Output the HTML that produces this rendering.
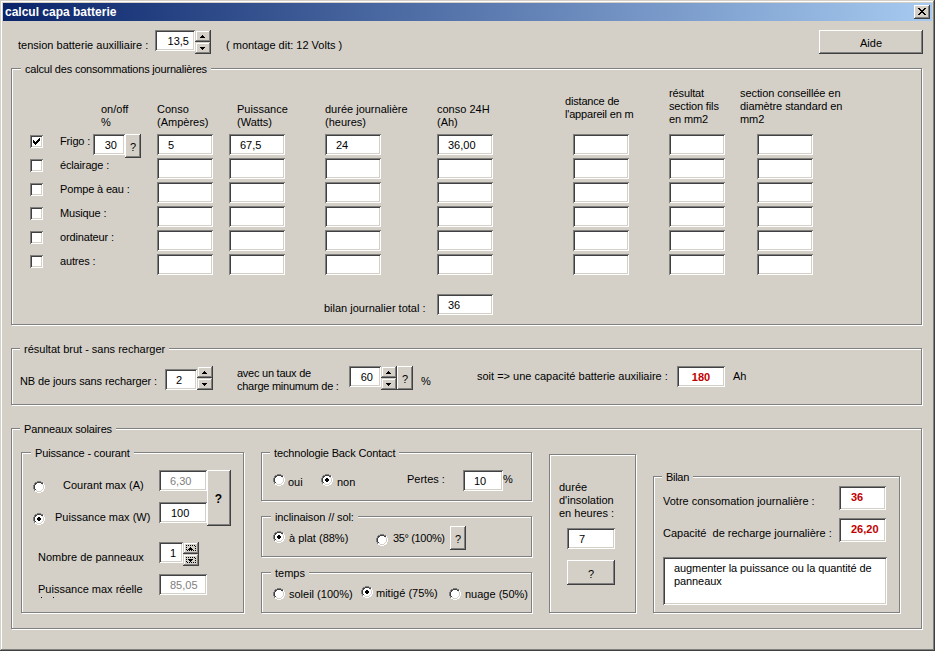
<!DOCTYPE html>
<html><head><meta charset="utf-8"><title>calcul capa batterie</title><style>
*{margin:0;padding:0;box-sizing:border-box}
html,body{width:935px;height:651px;overflow:hidden;background:#d4d0c8}
body{position:relative;font-family:"Liberation Sans",sans-serif;font-size:11px;line-height:13px;color:#000}
.t{position:absolute;white-space:pre;line-height:13px}
.gt{background:#d4d0c8}
.tb{position:absolute;background:#fff;box-shadow:inset 1px 1px 0 #808080,inset -1px -1px 0 #fff,inset 2px 2px 0 #404040,inset -2px -2px 0 #d4d0c8;white-space:pre;line-height:13px;overflow:hidden}
.btn{position:absolute;background:#d4d0c8;box-shadow:inset -1px -1px 0 #404040,inset 1px 1px 0 #fff,inset -2px -2px 0 #808080,inset 2px 2px 0 #d4d0c8;white-space:pre;line-height:13px}
.sbtn{position:absolute;background:#d4d0c8;box-shadow:inset -1px -1px 0 #404040,inset 1px 1px 0 #d4d0c8,inset -2px -2px 0 #808080,inset 2px 2px 0 #fff}
.grp{position:absolute;border:1px solid #808080;box-shadow:1px 1px 0 #fff,inset 1px 1px 0 #fff}
.chk{position:absolute;width:13px;height:13px;background:#fff;box-shadow:inset 1px 1px 0 #808080,inset -1px -1px 0 #fff,inset 2px 2px 0 #404040,inset -2px -2px 0 #d4d0c8}
.au,.ad{position:absolute;left:5px;top:5px;width:5px;height:3px}
.red{color:#c00000;font-weight:bold}
.gry{color:#808080}
</style></head><body>
<div style="position:absolute;left:0;top:0;width:935px;height:651px;box-shadow:inset -1px -1px 0 #404040,inset 1px 1px 0 #d4d0c8,inset -2px -2px 0 #808080,inset 2px 2px 0 #fff"></div>
<div style="position:absolute;left:3px;top:3px;width:929px;height:18px;background:linear-gradient(to right,#0a246a,#a6caf0)"></div>
<div class="t" style="left:5px;top:6px;color:#fff;font-weight:bold;font-size:12px">calcul capa batterie</div>
<div class="btn" style="left:914px;top:5px;width:16px;height:14px"><svg width="8" height="7" style="position:absolute;left:4px;top:3px" shape-rendering="crispEdges"><path d="M0 0h2v1h1v1h2v-1h1v-1h2v1h-1v1h-1v1h-1v1h1v1h1v1h1v1h-2v-1h-1v-1h-2v1h-1v1h-2v-1h1v-1h1v-1h1v-1h-1v-1h-1v-1h-1z" fill="#000"/></svg></div>
<div class="t" style="left:18px;top:39px;">tension batterie auxilliaire :</div>
<div class="tb" style="left:155px;top:30px;width:40px;height:21px;"><span style="position:absolute;right:6px;top:5px;">13,5</span></div>
<div class="sbtn" style="left:195px;top:30px;width:16px;height:12px"><svg class="au" width="5" height="3" shape-rendering="crispEdges"><path d="M2 0h1v1h1v1h1v1h-5v-1h1v-1h1z" fill="#000"/></svg></div>
<div class="sbtn" style="left:195px;top:42px;width:16px;height:12px"><svg class="ad" width="5" height="3" shape-rendering="crispEdges"><path d="M0 0h5v1h-1v1h-1v1h-1v-1h-1v-1h-1z" fill="#000"/></svg></div>
<div class="t" style="left:226px;top:39px;">( montage dit: 12 Volts )</div>
<div class="btn" style="left:819px;top:30px;width:104px;height:24px;"><span style="position:absolute;left:0;right:0;text-align:center;top:7px;">Aide</span></div>
<div class="grp" style="left:11px;top:68px;width:911px;height:257px"></div>
<div class="t gt" style="left:21px;top:63px;padding:0 4px;letter-spacing:-0.19px">calcul des consommations journalières</div>
<div class="t" style="left:101px;top:103px;">on/off
%</div>
<div class="t" style="left:157px;top:103px;">Conso
(Ampères)</div>
<div class="t" style="left:237px;top:103px;">Puissance
(Watts)</div>
<div class="t" style="left:325px;top:103px;">durée journalière
(heures)</div>
<div class="t" style="left:437px;top:103px;">conso 24H
(Ah)</div>
<div class="t" style="left:565px;top:95px;letter-spacing:-0.18px">distance de
l'appareil en m</div>
<div class="t" style="left:669px;top:87px;letter-spacing:-0.13px">résultat
section fils
en mm2</div>
<div class="t" style="left:740px;top:87px;letter-spacing:-0.08px">section conseillée en
diamètre standard en
mm2</div>
<div class="chk" style="left:30px;top:135px"><svg width="7" height="7" style="position:absolute;left:3px;top:3px" shape-rendering="crispEdges"><path d="M6 0h1v3h-1v1h-1v1h-1v1h-1v1h-1v-1h-1v-1h-1v-3h1v1h1v1h1v-1h1v-1h1v-1h1z" fill="#000"/></svg></div>
<div class="t" style="left:60px;top:135px;letter-spacing:-0.15px">Frigo :</div>
<div class="tb" style="left:157px;top:134px;width:56px;height:21px;"><span style="position:absolute;left:11px;top:5px;">5</span></div>
<div class="tb" style="left:229px;top:134px;width:56px;height:21px;"><span style="position:absolute;left:11px;top:5px;">67,5</span></div>
<div class="tb" style="left:325px;top:134px;width:56px;height:21px;"><span style="position:absolute;left:11px;top:5px;">24</span></div>
<div class="tb" style="left:437px;top:134px;width:56px;height:21px;"><span style="position:absolute;left:11px;top:5px;">36,00</span></div>
<div class="tb" style="left:573px;top:134px;width:56px;height:21px;"></div>
<div class="tb" style="left:669px;top:134px;width:56px;height:21px;"></div>
<div class="tb" style="left:757px;top:134px;width:56px;height:21px;"></div>
<div class="chk" style="left:30px;top:159px"></div>
<div class="t" style="left:60px;top:159px;letter-spacing:-0.15px">éclairage :</div>
<div class="tb" style="left:157px;top:158px;width:56px;height:21px;"></div>
<div class="tb" style="left:229px;top:158px;width:56px;height:21px;"></div>
<div class="tb" style="left:325px;top:158px;width:56px;height:21px;"></div>
<div class="tb" style="left:437px;top:158px;width:56px;height:21px;"></div>
<div class="tb" style="left:573px;top:158px;width:56px;height:21px;"></div>
<div class="tb" style="left:669px;top:158px;width:56px;height:21px;"></div>
<div class="tb" style="left:757px;top:158px;width:56px;height:21px;"></div>
<div class="chk" style="left:30px;top:183px"></div>
<div class="t" style="left:60px;top:183px;letter-spacing:-0.15px">Pompe à eau :</div>
<div class="tb" style="left:157px;top:182px;width:56px;height:21px;"></div>
<div class="tb" style="left:229px;top:182px;width:56px;height:21px;"></div>
<div class="tb" style="left:325px;top:182px;width:56px;height:21px;"></div>
<div class="tb" style="left:437px;top:182px;width:56px;height:21px;"></div>
<div class="tb" style="left:573px;top:182px;width:56px;height:21px;"></div>
<div class="tb" style="left:669px;top:182px;width:56px;height:21px;"></div>
<div class="tb" style="left:757px;top:182px;width:56px;height:21px;"></div>
<div class="chk" style="left:30px;top:207px"></div>
<div class="t" style="left:60px;top:207px;letter-spacing:-0.15px">Musique :</div>
<div class="tb" style="left:157px;top:206px;width:56px;height:21px;"></div>
<div class="tb" style="left:229px;top:206px;width:56px;height:21px;"></div>
<div class="tb" style="left:325px;top:206px;width:56px;height:21px;"></div>
<div class="tb" style="left:437px;top:206px;width:56px;height:21px;"></div>
<div class="tb" style="left:573px;top:206px;width:56px;height:21px;"></div>
<div class="tb" style="left:669px;top:206px;width:56px;height:21px;"></div>
<div class="tb" style="left:757px;top:206px;width:56px;height:21px;"></div>
<div class="chk" style="left:30px;top:231px"></div>
<div class="t" style="left:60px;top:231px;letter-spacing:-0.15px">ordinateur :</div>
<div class="tb" style="left:157px;top:230px;width:56px;height:21px;"></div>
<div class="tb" style="left:229px;top:230px;width:56px;height:21px;"></div>
<div class="tb" style="left:325px;top:230px;width:56px;height:21px;"></div>
<div class="tb" style="left:437px;top:230px;width:56px;height:21px;"></div>
<div class="tb" style="left:573px;top:230px;width:56px;height:21px;"></div>
<div class="tb" style="left:669px;top:230px;width:56px;height:21px;"></div>
<div class="tb" style="left:757px;top:230px;width:56px;height:21px;"></div>
<div class="chk" style="left:30px;top:255px"></div>
<div class="t" style="left:60px;top:255px;letter-spacing:-0.15px">autres :</div>
<div class="tb" style="left:157px;top:254px;width:56px;height:21px;"></div>
<div class="tb" style="left:229px;top:254px;width:56px;height:21px;"></div>
<div class="tb" style="left:325px;top:254px;width:56px;height:21px;"></div>
<div class="tb" style="left:437px;top:254px;width:56px;height:21px;"></div>
<div class="tb" style="left:573px;top:254px;width:56px;height:21px;"></div>
<div class="tb" style="left:669px;top:254px;width:56px;height:21px;"></div>
<div class="tb" style="left:757px;top:254px;width:56px;height:21px;"></div>
<div class="tb" style="left:93px;top:134px;width:32px;height:21px;"><span style="position:absolute;right:8px;top:5px;">30</span></div>
<div class="btn" style="left:125px;top:134px;width:16px;height:24px;"><span style="position:absolute;left:0;right:0;text-align:center;top:7px;">?</span></div>
<div class="t" style="left:324px;top:302px;">bilan journalier total :</div>
<div class="tb" style="left:437px;top:294px;width:56px;height:21px;"><span style="position:absolute;left:11px;top:5px;">36</span></div>
<div class="grp" style="left:11px;top:348px;width:911px;height:57px"></div>
<div class="t gt" style="left:20px;top:343px;padding:0 4px;">résultat brut - sans recharger</div>
<div class="t" style="left:20px;top:375px;letter-spacing:-0.11px">NB de jours sans recharger :</div>
<div class="tb" style="left:165px;top:369px;width:32px;height:21px;"><span style="position:absolute;left:11px;top:5px;">2</span></div>
<div class="sbtn" style="left:197px;top:366px;width:16px;height:12px"><svg class="au" width="5" height="3" shape-rendering="crispEdges"><path d="M2 0h1v1h1v1h1v1h-5v-1h1v-1h1z" fill="#000"/></svg></div>
<div class="sbtn" style="left:197px;top:378px;width:16px;height:12px"><svg class="ad" width="5" height="3" shape-rendering="crispEdges"><path d="M0 0h5v1h-1v1h-1v1h-1v-1h-1v-1h-1z" fill="#000"/></svg></div>
<div class="t" style="left:237px;top:367px;letter-spacing:-0.25px">avec un taux de
charge minumum de :</div>
<div class="tb" style="left:349px;top:366px;width:32px;height:21px;"><span style="position:absolute;right:8px;top:5px;">60</span></div>
<div class="sbtn" style="left:381px;top:366px;width:16px;height:12px"><svg class="au" width="5" height="3" shape-rendering="crispEdges"><path d="M2 0h1v1h1v1h1v1h-5v-1h1v-1h1z" fill="#000"/></svg></div>
<div class="sbtn" style="left:381px;top:378px;width:16px;height:12px"><svg class="ad" width="5" height="3" shape-rendering="crispEdges"><path d="M0 0h5v1h-1v1h-1v1h-1v-1h-1v-1h-1z" fill="#000"/></svg></div>
<div class="btn" style="left:397px;top:366px;width:16px;height:24px;"><span style="position:absolute;left:0;right:0;text-align:center;top:7px;">?</span></div>
<div class="t" style="left:421px;top:375px;">%</div>
<div class="t" style="left:477px;top:370px;">soit =&gt; une capacité batterie auxiliaire :</div>
<div class="tb" style="left:677px;top:366px;width:48px;height:21px;"><span style="position:absolute;left:0;right:0;text-align:center;top:5px;color:#c00000;font-weight:bold">180</span></div>
<div class="t" style="left:733px;top:370px;">Ah</div>
<div class="grp" style="left:11px;top:428px;width:911px;height:201px"></div>
<div class="t gt" style="left:20px;top:423px;padding:0 4px;letter-spacing:-0.15px">Panneaux solaires</div>
<div class="grp" style="left:21px;top:452px;width:223px;height:161px"></div>
<div class="t gt" style="left:31px;top:447px;padding:0 4px;letter-spacing:-0.14px">Puissance - courant</div>
<svg width="12" height="12" shape-rendering="crispEdges" style="position:absolute;left:33px;top:481px">
<path d="M4 0h4v1h2v1h1v2h1v4h-1v2h-1v1h-2v1h-4v-1h-2v-1h-1v-2h-1v-4h1v-2h1v-1h2z" fill="#fff"/>
<path d="M4 0h4v1h-4zM2 1h2v1h-2zM8 1h2v1h-2zM1 2h1v2h-1zM0 4h1v4h-1zM1 8h1v2h-1z" fill="#808080"/>
<path d="M4 1h4v1h-4zM2 2h2v1h-2zM8 2h2v1h-2zM2 3h1v1h-1zM1 4h1v4h-1zM2 8h1v1h-1z" fill="#404040"/>
<path d="M10 2h1v2h-1zM11 4h1v4h-1zM10 8h1v2h-1zM8 10h2v1h-2zM4 11h4v1h-4zM2 10h2v1h-2z" fill="#fff"/>
<path d="M9 3h1v1h-1zM10 4h1v4h-1zM9 8h1v1h-1zM8 9h1v1h-1zM4 10h4v1h-4zM3 9h1v1h-1z" fill="#d4d0c8"/>
</svg>
<div class="t" style="left:63px;top:479px;">Courant max (A)</div>
<svg width="12" height="12" shape-rendering="crispEdges" style="position:absolute;left:33px;top:513px">
<path d="M4 0h4v1h2v1h1v2h1v4h-1v2h-1v1h-2v1h-4v-1h-2v-1h-1v-2h-1v-4h1v-2h1v-1h2z" fill="#fff"/>
<path d="M4 0h4v1h-4zM2 1h2v1h-2zM8 1h2v1h-2zM1 2h1v2h-1zM0 4h1v4h-1zM1 8h1v2h-1z" fill="#808080"/>
<path d="M4 1h4v1h-4zM2 2h2v1h-2zM8 2h2v1h-2zM2 3h1v1h-1zM1 4h1v4h-1zM2 8h1v1h-1z" fill="#404040"/>
<path d="M10 2h1v2h-1zM11 4h1v4h-1zM10 8h1v2h-1zM8 10h2v1h-2zM4 11h4v1h-4zM2 10h2v1h-2z" fill="#fff"/>
<path d="M9 3h1v1h-1zM10 4h1v4h-1zM9 8h1v1h-1zM8 9h1v1h-1zM4 10h4v1h-4zM3 9h1v1h-1z" fill="#d4d0c8"/>
<rect x="5" y="4" width="2" height="4" fill="#000"/><rect x="4" y="5" width="4" height="2" fill="#000"/></svg>
<div class="t" style="left:55px;top:511px;">Puissance max (W)</div>
<div class="tb" style="left:159px;top:470px;width:48px;height:21px;"><span style="position:absolute;left:11px;top:5px;color:#808080">6,30</span></div>
<div class="tb" style="left:159px;top:502px;width:48px;height:21px;"><span style="position:absolute;left:12px;top:5px;">100</span></div>
<div class="btn" style="left:207px;top:470px;width:24px;height:56px;"><span style="position:absolute;left:0;right:0;text-align:center;top:23px;font-weight:bold;font-size:12px;margin-left:-1px">?</span></div>
<div class="t" style="left:38px;top:551px;">Nombre de panneaux</div>
<div class="tb" style="left:159px;top:542px;width:24px;height:21px;"><span style="position:absolute;left:11px;top:5px;">1</span></div>
<div class="sbtn" style="left:183px;top:542px;width:16px;height:12px"><svg width="10" height="6" style="position:absolute;left:3px;top:3px" shape-rendering="crispEdges"><path d="M0 0h1v1h-1zM2 0h1v1h-1zM4 0h1v1h-1zM6 0h1v1h-1zM8 0h1v1h-1zM1 5h1v1h-1zM3 5h1v1h-1zM5 5h1v1h-1zM7 5h1v1h-1zM9 5h1v1h-1zM0 2h1v1h-1zM0 4h1v1h-1zM9 1h1v1h-1zM9 3h1v1h-1z" fill="#000"/></svg><svg class="au" width="5" height="3" shape-rendering="crispEdges"><path d="M2 0h1v1h1v1h1v1h-5v-1h1v-1h1z" fill="#000"/></svg></div>
<div class="sbtn" style="left:183px;top:554px;width:16px;height:12px"><svg width="10" height="6" style="position:absolute;left:3px;top:3px" shape-rendering="crispEdges"><path d="M0 0h1v1h-1zM2 0h1v1h-1zM4 0h1v1h-1zM6 0h1v1h-1zM8 0h1v1h-1zM1 5h1v1h-1zM3 5h1v1h-1zM5 5h1v1h-1zM7 5h1v1h-1zM9 5h1v1h-1zM0 2h1v1h-1zM0 4h1v1h-1zM9 1h1v1h-1zM9 3h1v1h-1z" fill="#000"/></svg><svg class="ad" width="5" height="3" shape-rendering="crispEdges"><path d="M0 0h5v1h-1v1h-1v1h-1v-1h-1v-1h-1z" fill="#000"/></svg></div>
<div class="t" style="left:38px;top:583px;">Puissance max réelle</div>
<div class="tb" style="left:159px;top:574px;width:48px;height:21px;"><span style="position:absolute;left:11px;top:5px;color:#808080">85,05</span></div>
<div style="position:absolute;left:41px;top:597px;width:1px;height:1px;background:#000"></div><div style="position:absolute;left:53px;top:597px;width:1px;height:1px;background:#000"></div>
<div class="grp" style="left:261px;top:452px;width:271px;height:49px"></div>
<div class="t gt" style="left:270px;top:447px;padding:0 4px;letter-spacing:-0.14px">technologie Back Contact</div>
<svg width="12" height="12" shape-rendering="crispEdges" style="position:absolute;left:273px;top:474px">
<path d="M4 0h4v1h2v1h1v2h1v4h-1v2h-1v1h-2v1h-4v-1h-2v-1h-1v-2h-1v-4h1v-2h1v-1h2z" fill="#fff"/>
<path d="M4 0h4v1h-4zM2 1h2v1h-2zM8 1h2v1h-2zM1 2h1v2h-1zM0 4h1v4h-1zM1 8h1v2h-1z" fill="#808080"/>
<path d="M4 1h4v1h-4zM2 2h2v1h-2zM8 2h2v1h-2zM2 3h1v1h-1zM1 4h1v4h-1zM2 8h1v1h-1z" fill="#404040"/>
<path d="M10 2h1v2h-1zM11 4h1v4h-1zM10 8h1v2h-1zM8 10h2v1h-2zM4 11h4v1h-4zM2 10h2v1h-2z" fill="#fff"/>
<path d="M9 3h1v1h-1zM10 4h1v4h-1zM9 8h1v1h-1zM8 9h1v1h-1zM4 10h4v1h-4zM3 9h1v1h-1z" fill="#d4d0c8"/>
</svg>
<div class="t" style="left:288px;top:476px;">oui</div>
<svg width="12" height="12" shape-rendering="crispEdges" style="position:absolute;left:321px;top:474px">
<path d="M4 0h4v1h2v1h1v2h1v4h-1v2h-1v1h-2v1h-4v-1h-2v-1h-1v-2h-1v-4h1v-2h1v-1h2z" fill="#fff"/>
<path d="M4 0h4v1h-4zM2 1h2v1h-2zM8 1h2v1h-2zM1 2h1v2h-1zM0 4h1v4h-1zM1 8h1v2h-1z" fill="#808080"/>
<path d="M4 1h4v1h-4zM2 2h2v1h-2zM8 2h2v1h-2zM2 3h1v1h-1zM1 4h1v4h-1zM2 8h1v1h-1z" fill="#404040"/>
<path d="M10 2h1v2h-1zM11 4h1v4h-1zM10 8h1v2h-1zM8 10h2v1h-2zM4 11h4v1h-4zM2 10h2v1h-2z" fill="#fff"/>
<path d="M9 3h1v1h-1zM10 4h1v4h-1zM9 8h1v1h-1zM8 9h1v1h-1zM4 10h4v1h-4zM3 9h1v1h-1z" fill="#d4d0c8"/>
<rect x="5" y="4" width="2" height="4" fill="#000"/><rect x="4" y="5" width="4" height="2" fill="#000"/></svg>
<div class="t" style="left:337px;top:476px;">non</div>
<div class="t" style="left:407px;top:473px;">Pertes :</div>
<div class="tb" style="left:463px;top:470px;width:40px;height:21px;"><span style="position:absolute;left:11px;top:5px;">10</span></div>
<div class="t" style="left:503px;top:473px;">%</div>
<div class="grp" style="left:261px;top:516px;width:271px;height:41px"></div>
<div class="t gt" style="left:271px;top:511px;padding:0 4px;letter-spacing:-0.1px">inclinaison // sol:</div>
<svg width="12" height="12" shape-rendering="crispEdges" style="position:absolute;left:273px;top:531px">
<path d="M4 0h4v1h2v1h1v2h1v4h-1v2h-1v1h-2v1h-4v-1h-2v-1h-1v-2h-1v-4h1v-2h1v-1h2z" fill="#fff"/>
<path d="M4 0h4v1h-4zM2 1h2v1h-2zM8 1h2v1h-2zM1 2h1v2h-1zM0 4h1v4h-1zM1 8h1v2h-1z" fill="#808080"/>
<path d="M4 1h4v1h-4zM2 2h2v1h-2zM8 2h2v1h-2zM2 3h1v1h-1zM1 4h1v4h-1zM2 8h1v1h-1z" fill="#404040"/>
<path d="M10 2h1v2h-1zM11 4h1v4h-1zM10 8h1v2h-1zM8 10h2v1h-2zM4 11h4v1h-4zM2 10h2v1h-2z" fill="#fff"/>
<path d="M9 3h1v1h-1zM10 4h1v4h-1zM9 8h1v1h-1zM8 9h1v1h-1zM4 10h4v1h-4zM3 9h1v1h-1z" fill="#d4d0c8"/>
<rect x="5" y="4" width="2" height="4" fill="#000"/><rect x="4" y="5" width="4" height="2" fill="#000"/></svg>
<div class="t" style="left:289px;top:532px;">à plat (88%)</div>
<svg width="12" height="12" shape-rendering="crispEdges" style="position:absolute;left:376px;top:534px">
<path d="M4 0h4v1h2v1h1v2h1v4h-1v2h-1v1h-2v1h-4v-1h-2v-1h-1v-2h-1v-4h1v-2h1v-1h2z" fill="#fff"/>
<path d="M4 0h4v1h-4zM2 1h2v1h-2zM8 1h2v1h-2zM1 2h1v2h-1zM0 4h1v4h-1zM1 8h1v2h-1z" fill="#808080"/>
<path d="M4 1h4v1h-4zM2 2h2v1h-2zM8 2h2v1h-2zM2 3h1v1h-1zM1 4h1v4h-1zM2 8h1v1h-1z" fill="#404040"/>
<path d="M10 2h1v2h-1zM11 4h1v4h-1zM10 8h1v2h-1zM8 10h2v1h-2zM4 11h4v1h-4zM2 10h2v1h-2z" fill="#fff"/>
<path d="M9 3h1v1h-1zM10 4h1v4h-1zM9 8h1v1h-1zM8 9h1v1h-1zM4 10h4v1h-4zM3 9h1v1h-1z" fill="#d4d0c8"/>
</svg>
<div class="t" style="left:393px;top:532px;letter-spacing:-0.35px">35° (100%)</div>
<div class="btn" style="left:450px;top:526px;width:16px;height:24px;"><span style="position:absolute;left:0;right:0;text-align:center;top:7px;">?</span></div>
<div class="grp" style="left:261px;top:572px;width:271px;height:41px"></div>
<div class="t gt" style="left:271px;top:567px;padding:0 4px;">temps</div>
<svg width="12" height="12" shape-rendering="crispEdges" style="position:absolute;left:273px;top:588px">
<path d="M4 0h4v1h2v1h1v2h1v4h-1v2h-1v1h-2v1h-4v-1h-2v-1h-1v-2h-1v-4h1v-2h1v-1h2z" fill="#fff"/>
<path d="M4 0h4v1h-4zM2 1h2v1h-2zM8 1h2v1h-2zM1 2h1v2h-1zM0 4h1v4h-1zM1 8h1v2h-1z" fill="#808080"/>
<path d="M4 1h4v1h-4zM2 2h2v1h-2zM8 2h2v1h-2zM2 3h1v1h-1zM1 4h1v4h-1zM2 8h1v1h-1z" fill="#404040"/>
<path d="M10 2h1v2h-1zM11 4h1v4h-1zM10 8h1v2h-1zM8 10h2v1h-2zM4 11h4v1h-4zM2 10h2v1h-2z" fill="#fff"/>
<path d="M9 3h1v1h-1zM10 4h1v4h-1zM9 8h1v1h-1zM8 9h1v1h-1zM4 10h4v1h-4zM3 9h1v1h-1z" fill="#d4d0c8"/>
</svg>
<div class="t" style="left:289px;top:588px;">soleil (100%)</div>
<svg width="12" height="12" shape-rendering="crispEdges" style="position:absolute;left:361px;top:586px">
<path d="M4 0h4v1h2v1h1v2h1v4h-1v2h-1v1h-2v1h-4v-1h-2v-1h-1v-2h-1v-4h1v-2h1v-1h2z" fill="#fff"/>
<path d="M4 0h4v1h-4zM2 1h2v1h-2zM8 1h2v1h-2zM1 2h1v2h-1zM0 4h1v4h-1zM1 8h1v2h-1z" fill="#808080"/>
<path d="M4 1h4v1h-4zM2 2h2v1h-2zM8 2h2v1h-2zM2 3h1v1h-1zM1 4h1v4h-1zM2 8h1v1h-1z" fill="#404040"/>
<path d="M10 2h1v2h-1zM11 4h1v4h-1zM10 8h1v2h-1zM8 10h2v1h-2zM4 11h4v1h-4zM2 10h2v1h-2z" fill="#fff"/>
<path d="M9 3h1v1h-1zM10 4h1v4h-1zM9 8h1v1h-1zM8 9h1v1h-1zM4 10h4v1h-4zM3 9h1v1h-1z" fill="#d4d0c8"/>
<rect x="5" y="4" width="2" height="4" fill="#000"/><rect x="4" y="5" width="4" height="2" fill="#000"/></svg>
<div class="t" style="left:376px;top:587px;">mitigé (75%)</div>
<svg width="12" height="12" shape-rendering="crispEdges" style="position:absolute;left:449px;top:588px">
<path d="M4 0h4v1h2v1h1v2h1v4h-1v2h-1v1h-2v1h-4v-1h-2v-1h-1v-2h-1v-4h1v-2h1v-1h2z" fill="#fff"/>
<path d="M4 0h4v1h-4zM2 1h2v1h-2zM8 1h2v1h-2zM1 2h1v2h-1zM0 4h1v4h-1zM1 8h1v2h-1z" fill="#808080"/>
<path d="M4 1h4v1h-4zM2 2h2v1h-2zM8 2h2v1h-2zM2 3h1v1h-1zM1 4h1v4h-1zM2 8h1v1h-1z" fill="#404040"/>
<path d="M10 2h1v2h-1zM11 4h1v4h-1zM10 8h1v2h-1zM8 10h2v1h-2zM4 11h4v1h-4zM2 10h2v1h-2z" fill="#fff"/>
<path d="M9 3h1v1h-1zM10 4h1v4h-1zM9 8h1v1h-1zM8 9h1v1h-1zM4 10h4v1h-4zM3 9h1v1h-1z" fill="#d4d0c8"/>
</svg>
<div class="t" style="left:465px;top:588px;">nuage (50%)</div>
<div class="grp" style="left:549px;top:454px;width:87px;height:159px"></div>
<div class="t" style="left:559px;top:481px;">durée
d'insolation
en heures :</div>
<div class="tb" style="left:567px;top:528px;width:48px;height:21px;"><span style="position:absolute;left:12px;top:5px;">7</span></div>
<div class="btn" style="left:567px;top:560px;width:48px;height:25px;"><span style="position:absolute;left:0;right:0;text-align:center;top:8px;">?</span></div>
<div class="grp" style="left:653px;top:476px;width:247px;height:137px"></div>
<div class="t gt" style="left:662px;top:471px;padding:0 4px;letter-spacing:-0.3px">Bilan</div>
<div class="t" style="left:663px;top:495px;">Votre consomation journalière :</div>
<div class="tb" style="left:839px;top:486px;width:47px;height:24px;"><span style="position:absolute;left:12px;top:5px;color:#c00000;font-weight:bold">36</span></div>
<div class="t" style="left:663px;top:527px;">Capacité  de recharge journalière :</div>
<div class="tb" style="left:839px;top:518px;width:47px;height:24px;"><span style="position:absolute;left:12px;top:5px;color:#c00000;font-weight:bold">26,20</span></div>
<div class="tb" style="left:663px;top:557px;width:224px;height:48px"><div style="position:absolute;left:11px;top:5px;white-space:pre;letter-spacing:-0.09px">augmenter la puissance ou la quantité de
panneaux</div></div>
</body></html>
